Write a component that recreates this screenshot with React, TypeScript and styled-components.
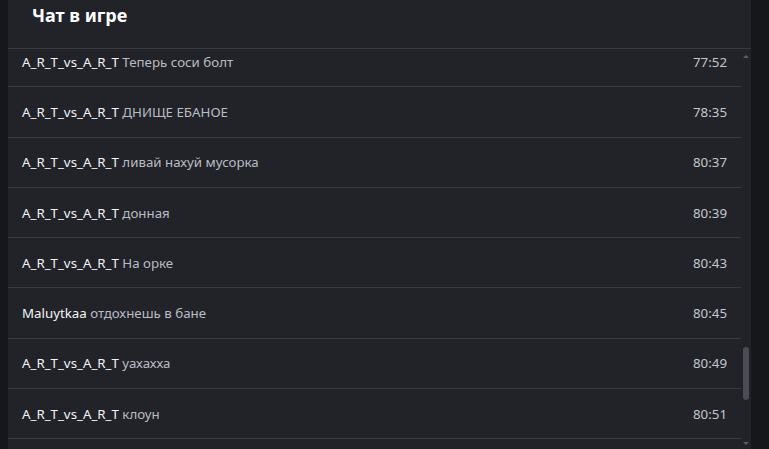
import styled, { createGlobalStyle } from 'styled-components';

const GlobalStyle = createGlobalStyle`
  html, body {
    margin: 0;
    padding: 0;
    background: #16171a;
  }
  body {
    font-family: "Noto Sans", "Open Sans", Arial, sans-serif;
  }
`;

type Message = { user: string; text: string; time: string };

const messages: Message[] = [
  { user: 'A_R_T_vs_A_R_T', text: 'Теперь соси болт', time: '77:52' },
  { user: 'A_R_T_vs_A_R_T', text: 'ДНИЩЕ ЕБАНОЕ', time: '78:35' },
  { user: 'A_R_T_vs_A_R_T', text: 'ливай нахуй мусорка', time: '80:37' },
  { user: 'A_R_T_vs_A_R_T', text: 'донная', time: '80:39' },
  { user: 'A_R_T_vs_A_R_T', text: 'На орке', time: '80:43' },
  { user: 'Maluytkaa', text: 'отдохнешь в бане', time: '80:45' },
  { user: 'A_R_T_vs_A_R_T', text: 'уахахха', time: '80:49' },
  { user: 'A_R_T_vs_A_R_T', text: 'клоун', time: '80:51' },
];

const Page = styled.div`
  display: flex;
  height: 449px;
  padding: 0 18px 0 8px;
  background: #16171a;
`;

const Panel = styled.section`
  flex: 1;
  display: flex;
  flex-direction: column;
  background: #212329;
  overflow: hidden;
`;

const Header = styled.header`
  box-sizing: border-box;
  height: 49px;
  flex-shrink: 0;
  display: flex;
  align-items: flex-start;
  padding: 2px 24px 0;
  border-bottom: 1px solid #383a41;
`;

const Title = styled.h2`
  margin: 0;
  color: #ffffff;
  font-size: 18px;
  font-weight: 700;
  line-height: 26px;
`;

const Body = styled.div`
  flex: 1;
  display: flex;
  min-height: 0;
`;

const Viewport = styled.div`
  flex: 1;
  overflow: hidden;
`;

const List = styled.ul`
  list-style: none;
  margin: -12px 0 0;
  padding: 0;
`;

const Row = styled.li`
  box-sizing: border-box;
  height: 50.3px;
  display: flex;
  align-items: center;
  justify-content: space-between;
  padding: 0 14px;
  border-bottom: 1px solid #383a41;
  font-size: 13.3px;
`;

const Line = styled.span`
  color: #b9bcc3;
`;

const User = styled.span`
  color: #f2f3f5;
`;

const Time = styled.span`
  color: #c3c7ce;
`;

const Scrollbar = styled.div`
  width: 10px;
  flex-shrink: 0;
  display: flex;
  flex-direction: column;
  align-items: center;
  padding: 6px 0 4px;
  box-sizing: border-box;
`;

const Arrow = styled.div<{ $down?: boolean }>`
  width: 0;
  height: 0;
  border-left: 3px solid transparent;
  border-right: 3px solid transparent;
  ${(p) =>
    p.$down ? 'border-top: 3px solid #5b5e66;' : 'border-bottom: 3px solid #5b5e66;'}
`;

const Track = styled.div`
  flex: 1;
  width: 100%;
  display: flex;
  flex-direction: column;
  align-items: center;
  padding: 289px 0 42px;
  box-sizing: border-box;
`;

const Thumb = styled.div`
  width: 6px;
  flex: 1;
  border-radius: 3px;
  background: #4a4d55;
`;

export default function App() {
  return (
    <>
      <GlobalStyle />
      <Page>
        <Panel>
          <Header>
            <Title>Чат в игре</Title>
          </Header>
          <Body>
            <Viewport>
              <List>
                {messages.map((m, i) => (
                  <Row key={i}>
                    <Line>
                      <User>{m.user}</User> {m.text}
                    </Line>
                    <Time>{m.time}</Time>
                  </Row>
                ))}
              </List>
            </Viewport>
            <Scrollbar>
              <Arrow />
              <Track>
                <Thumb />
              </Track>
              <Arrow $down />
            </Scrollbar>
          </Body>
        </Panel>
      </Page>
    </>
  );
}
